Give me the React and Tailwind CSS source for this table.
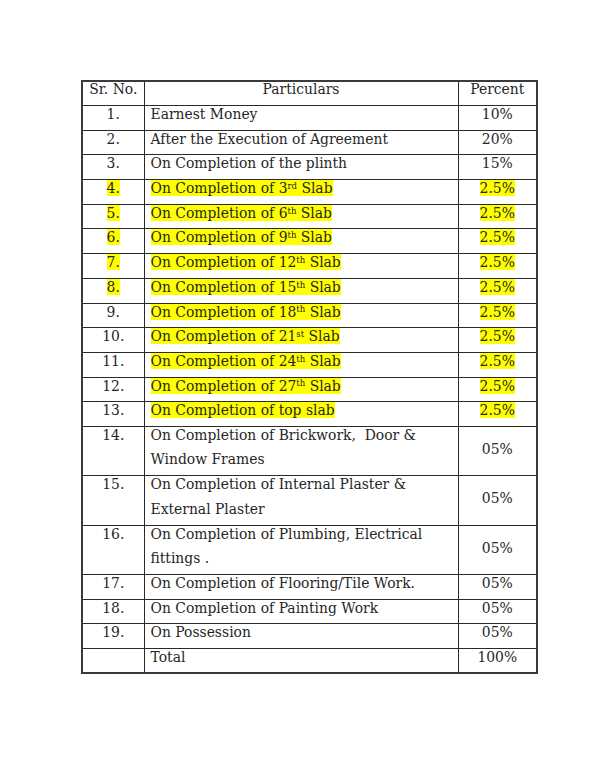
import React from 'react';

const rows = [
  { n: '1.', text: 'Earnest Money', pct: '10%' },
  { n: '2.', text: 'After the Execution of Agreement', pct: '20%' },
  { n: '3.', text: 'On Completion of the plinth', pct: '15%' },
  { n: '4.', slab: '3', sup: 'rd', pct: '2.5%', hl: true },
  { n: '5.', slab: '6', sup: 'th', pct: '2.5%', hl: true },
  { n: '6.', slab: '9', sup: 'th', pct: '2.5%', hl: true },
  { n: '7.', slab: '12', sup: 'th', pct: '2.5%', hl: true },
  { n: '8.', slab: '15', sup: 'th', pct: '2.5%', hl: true },
  { n: '9.', slab: '18', sup: 'th', pct: '2.5%', hl: 'partial' },
  { n: '10.', slab: '21', sup: 'st', pct: '2.5%', hl: 'partial' },
  { n: '11.', slab: '24', sup: 'th', pct: '2.5%', hl: 'partial' },
  { n: '12.', slab: '27', sup: 'th', pct: '2.5%', hl: 'partial' },
  { n: '13.', text: 'On Completion of top slab', pct: '2.5%', hl: 'partial' },
  { n: '14.', text: 'On Completion of Brickwork,\u00a0 Door & Window Frames', pct: '05%', tall: true },
  { n: '15.', text: 'On Completion of Internal Plaster & External Plaster', pct: '05%', tall: true },
  { n: '16.', text: 'On Completion of Plumbing, Electrical fittings .', pct: '05%', tall: true },
  { n: '17.', text: 'On Completion of Flooring/Tile Work.', pct: '05%' },
  { n: '18.', text: 'On Completion of Painting Work', pct: '05%' },
  { n: '19.', text: 'On Possession', pct: '05%' },
  { n: '', text: 'Total', pct: '100%' },
];

function Hl({ on, children }) {
  if (!on) return children;
  return <span className="bg-[#ffff00]">{children}</span>;
}

export default function App() {
  return (
    <div className="min-h-[768px] bg-white pt-[80px] pl-[81px] text-[#262626] text-[13.9px] font-['DejaVu_Serif',serif]">
      <table className="w-[455px] border-collapse border-2 border-[#3a3a3a] table-fixed">
        <colgroup>
          <col className="w-[62px]" />
          <col className="w-[314px]" />
          <col className="w-[79px]" />
        </colgroup>
        <thead>
          <tr className="h-[24.5px]">
            <th className="border border-[#2a2a2a] font-normal align-top"><div className="leading-[24.5px] -mt-[5px]">Sr. No.</div></th>
            <th className="border border-[#2a2a2a] font-normal align-top"><div className="leading-[24.5px] -mt-[5px]">Particulars</div></th>
            <th className="border border-[#2a2a2a] font-normal align-top"><div className="leading-[24.5px] -mt-[5px]">Percent</div></th>
          </tr>
        </thead>
        <tbody>
          {rows.map((r, i) => {
            const nHl = r.hl === true;
            const hl = !!r.hl;
            return (
              <tr key={i} className={r.tall ? 'h-[49.4px]' : 'h-[24.7px]'}>
                <td className="border border-[#2a2a2a] align-top text-center">
                  <div className="leading-[24.7px] -mt-[4px]"><Hl on={nHl}>{r.n}</Hl></div>
                </td>
                <td className="border border-[#2a2a2a] align-top pl-[6px] pr-[4px]">
                  <div className="leading-[24.5px] -mt-[4px]">
                    <Hl on={hl}>
                      {r.slab ? (
                        <>On Completion of {r.slab}<sup className="text-[8.5px]">{r.sup}</sup> Slab</>
                      ) : (
                        r.text
                      )}
                    </Hl>
                  </div>
                </td>
                <td className={`border border-[#2a2a2a] text-center ${r.tall ? 'align-middle' : 'align-top'}`}>
                  <div className="leading-[24.7px] -mt-[4px]"><Hl on={hl}>{r.pct}</Hl></div>
                </td>
              </tr>
            );
          })}
        </tbody>
      </table>
    </div>
  );
}
